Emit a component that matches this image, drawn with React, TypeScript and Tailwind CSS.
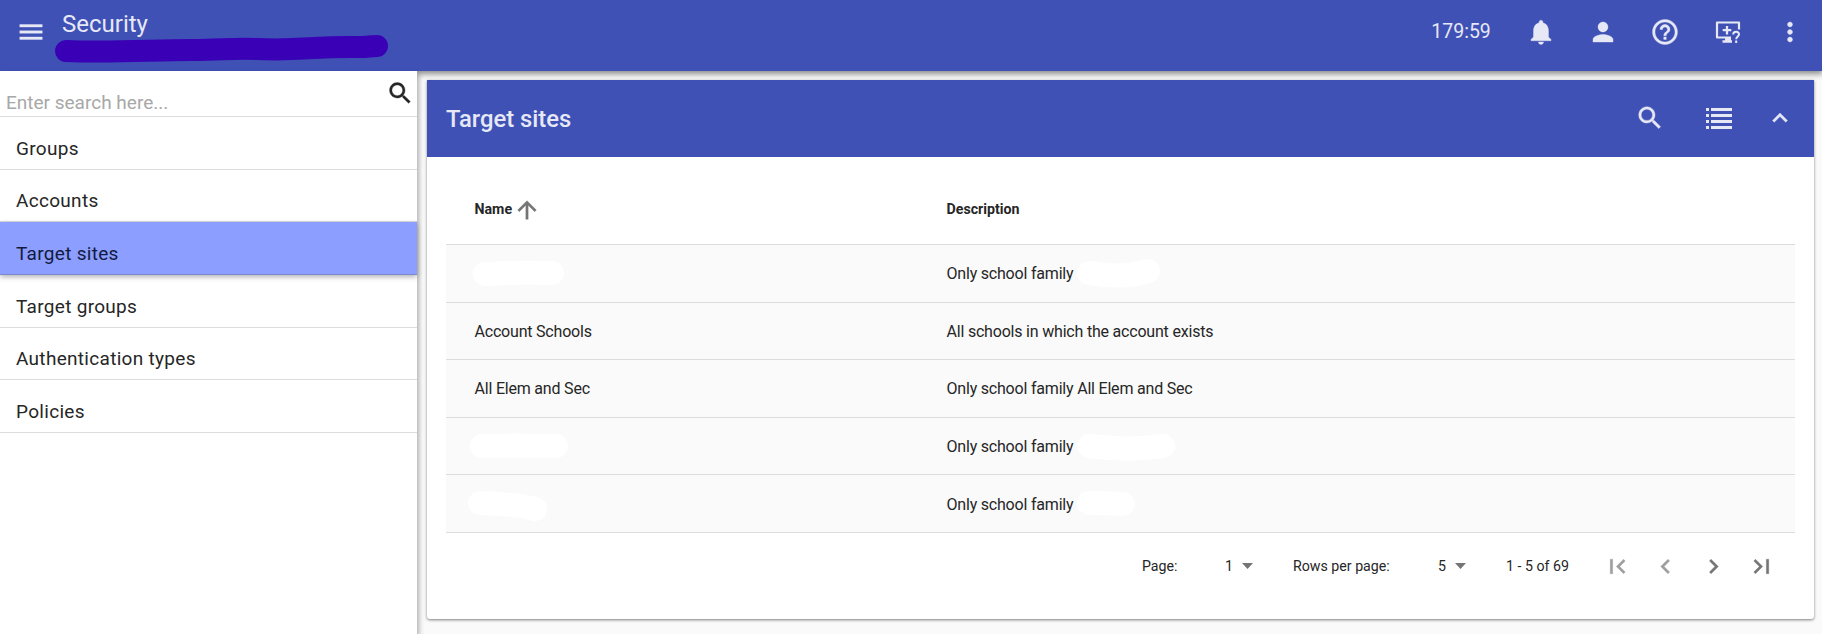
import type { ReactNode } from "react";

const ICON = {
  menu: "M3 18h18v-2H3v2zm0-5h18v-2H3v2zm0-7v2h18V6H3z",
  search:
    "M15.5 14h-.79l-.28-.27C15.41 12.59 16 11.11 16 9.5 16 5.91 13.09 3 9.5 3S3 5.91 3 9.5 5.91 16 9.5 16c1.61 0 3.09-.59 4.23-1.57l.27.28v.79l5 4.99L20.49 19l-4.99-5zm-6 0C7.01 14 5 11.99 5 9.5S7.01 5 9.5 5 14 7.01 14 9.5 11.99 14 9.5 14z",
  bell: "M12 22c1.1 0 2-.9 2-2h-4c0 1.1.89 2 2 2zm6-6v-5c0-3.07-1.64-5.64-4.5-6.32V4c0-.83-.67-1.5-1.5-1.5s-1.5.67-1.5 1.5v.68C7.63 5.36 6 7.92 6 11v5l-2 2v1h16v-1l-2-2z",
  person:
    "M12 12c2.21 0 4-1.79 4-4s-1.79-4-4-4-4 1.79-4 4 1.79 4 4 4zm0 2c-2.67 0-8 1.34-8 4v2h16v-2c0-2.66-5.33-4-8-4z",
  help: "M11 18h2v-2h-2v2zm1-16C6.48 2 2 6.48 2 12s4.48 10 10 10 10-4.48 10-10S17.52 2 12 2zm0 18c-4.41 0-8-3.59-8-8s3.59-8 8-8 8 3.59 8 8-3.59 8-8 8zm0-14c-2.21 0-4 1.79-4 4h2c0-1.1.9-2 2-2s2 .9 2 2c0 2-3 1.75-3 5h2c0-2.25 3-2.5 3-5 0-2.21-1.79-4-4-4z",
  more: "M12 8c1.1 0 2-.9 2-2s-.9-2-2-2-2 .9-2 2 .9 2 2 2zm0 2c-1.1 0-2 .9-2 2s.9 2 2 2 2-.9 2-2-.9-2-2-2zm0 6c-1.1 0-2 .9-2 2s.9 2 2 2 2-.9 2-2-.9-2-2-2z",
  up: "M12 8l-6 6 1.41 1.41L12 10.83l4.59 4.58L18 14z",
  sort: "M4 12l1.41 1.41L11 7.83V20h2V7.83l5.58 5.59L20 12l-8-8-8 8z",
  first: "M18.41 16.59L13.82 12l4.59-4.59L17 6l-6 6 6 6zM6 6h2v12H6z",
  prev: "M15.41 7.41L14 6l-6 6 6 6 1.41-1.41L10.83 12z",
  next: "M10 6L8.59 7.41 13.17 12l-4.58 4.59L10 18l6-6z",
  last: "M5.59 7.41L10.18 12l-4.59 4.59L7 18l6-6-6-6zM16 6h2v12h-2z",
};

function Icon({ d, className = "size-[30px]" }: { d: string; className?: string }) {
  return (
    <svg viewBox="0 0 24 24" fill="currentColor" className={`shrink-0 ${className}`}>
      <path d={d} stroke="currentColor" strokeWidth="0.3" />
    </svg>
  );
}

function MonitorHelp() {
  return (
    <svg viewBox="0 0 30 30" fill="none" stroke="currentColor" className="size-[30px] shrink-0">
      <path d="M18 20.500H4V5.500H26V12.500" strokeWidth="2.200" strokeLinejoin="round" />
      <path d="M14 9v8.500M9.700 13.200h8.600" strokeWidth="2.300" />
      <path d="M12 21h6v2.300h1v2.400H9.500v-2.400H12z" fill="currentColor" stroke="none" />
      <path d="M20.200 17.400c0-3.500 5.800-3.500 5.800-.2 0 2.300-2.800 2.300-2.800 5.100M23.200 23.600v2.400" strokeWidth="2" />
    </svg>
  );
}

function ListIcon() {
  return (
    <svg viewBox="0 0 26 21" fill="currentColor" className="h-[21px] w-[26px] shrink-0">
      {[0, 6, 12, 18].map((y) => (
        <g key={y}>
          <rect x="0" y={y} width="3" height="3" />
          <rect x="5" y={y} width="21" height="3" />
        </g>
      ))}
    </svg>
  );
}

const menu = ["Groups", "Accounts", "Target sites", "Target groups", "Authentication types", "Policies"];

function Blob({ d, className, width = 24 }: { d: string; className: string; width?: number }) {
  return (
    <svg className={`absolute overflow-visible ${className}`} width="1" height="1" fill="none" stroke="currentColor">
      <path d={d} strokeWidth={width} strokeLinecap="round" strokeLinejoin="round" />
    </svg>
  );
}

const rows: { name: ReactNode; text: string; mask?: ReactNode }[] = [
  {
    name: <Blob className="left-0 top-0 text-white" d="M10 29 Q40 27 77 28" />,
    text: "Only school family",
    mask: <Blob className="left-0 top-0 text-white" d="M142 28 Q175 34 201 26" />,
  },
  { name: "Account Schools", text: "All schools in which the account exists" },
  { name: "All Elem and Sec", text: "Only school family All Elem and Sec" },
  {
    name: <Blob className="left-0 top-0 text-white" d="M7 28 Q40 27 81 28" />,
    text: "Only school family",
    mask: <Blob className="left-0 top-0 text-white" d="M142 28 Q180 33 216 28" />,
  },
  {
    name: <Blob className="left-0 top-0 text-white" d="M5 28 Q50 30 60 34" />,
    text: "Only school family",
    mask: <Blob className="left-0 top-0 text-white" d="M142 28 Q160 28 176 29" />,
  },
];

export default function App() {
  return (
    <div className="flex h-[634px] w-[1822px] flex-col overflow-hidden bg-[#fafafa] font-[Roboto,sans-serif] text-[#262626]">
      <header className="relative z-10 flex h-[71px] shrink-0 bg-[#3f51b5] text-[#e6e8f6] shadow-[0_2px_6px_1px_rgba(0,0,0,0.45)]">
        <div className="flex w-[62px] items-center pb-2 pl-4">
          <Icon d={ICON.menu} />
        </div>
        <div className="relative pt-[9px] text-[24px] leading-[30px]">
          Security
          <Blob
            className="left-0 top-0 text-[#3a00b5]"
            width={22}
            d="M4 51 C50 53 90 50 130 50 C160 50 170 48 195 49 C240 51 250 46 300 47 C306 47 308 46 315 46"
          />
        </div>
        <div className="ml-auto flex items-center pb-2 pr-[17px]">
          <span className="mr-[35px] text-[19.500px]">179:59</span>
          <div className="flex items-center gap-[32.300px]">
            <Icon d={ICON.bell} />
            <Icon d={ICON.person} />
            <Icon d={ICON.help} />
            <MonitorHelp />
            <Icon d={ICON.more} />
          </div>
        </div>
      </header>
      <div className="flex min-h-0 flex-1">
        <aside className="z-20 flex w-[417px] shrink-0 flex-col bg-white shadow-[2px_3px_5px_rgba(0,0,0,0.3)]">
          <div className="flex h-[46px] shrink-0 justify-between border-b border-[#dcdcdc] pl-[6px] pr-[3px]">
            <span className="pt-[18px] text-[19px] leading-[28px] text-[#a8a8a8]">Enter search here...</span>
            <Icon d={ICON.search} className="mt-[8px] size-[28.500px]" />
          </div>
          {menu.map((m) => (
            <div
              key={m}
              className={`flex h-[52.700px] shrink-0 items-center border-b pl-[16px] pt-[12px] text-[19px] tracking-[0.3px] ${
                m === "Target sites"
                  ? "relative border-[#7d86d0] bg-[#8c9eff] text-[#131a40] shadow-[0_2px_5px_rgba(0,0,0,0.3)]"
                  : "border-[#dcdcdc]"
              }`}
            >
              {m}
            </div>
          ))}
        </aside>
        <main className="min-w-0 flex-1 pl-[10px] pr-[8px] pt-[9px]">
          <section className="flex h-[539px] flex-col rounded-b-[3px] bg-white shadow-[0_1px_3px_rgba(0,0,0,0.5)]">
            <div className="flex h-[77px] shrink-0 items-center bg-[#3f51b5] pl-[19px] pr-[19px] text-[#e6e8f6]">
              <h2 className="pt-[2px] text-[23.800px] font-medium">Target sites</h2>
              <div className="ml-auto flex items-center pb-px">
                <Icon d={ICON.search} />
                <div className="ml-[41px] mr-[33px]">
                  <ListIcon />
                </div>
                <Icon d={ICON.up} />
              </div>
            </div>
            <div className="mx-[19px] flex h-[88px] shrink-0 items-center border-b border-[#dcdcdc] pl-[28.500px] pt-[18px] text-[14.200px] font-bold">
              <div className="flex w-[472px] items-center">
                Name
                <Icon d={ICON.sort} className="ml-px size-[28px] text-[#757575]" />
              </div>
              <div>Description</div>
            </div>
            {rows.map((r, i) => (
              <div
                key={i}
                className="mx-[19px] flex h-[57.600px] shrink-0 items-center border-b border-[#dcdcdc] bg-[#fafafa] pl-[28.500px] text-[16px] tracking-[-0.2px]"
              >
                <div className="relative flex h-full w-[472px] items-center pt-[2px]">{r.name}</div>
                <div className="relative flex h-full items-center pt-[2px]">
                  {r.text}
                  {r.mask}
                </div>
              </div>
            ))}
            <div className="ml-auto mr-[38px] flex h-[67px] items-center text-[14.200px]">
              <span className="w-[83px]">Page:</span>
              <span className="w-[17px]">1</span>
              <Caret />
              <span className="ml-[40px] w-[145px]">Rows per page:</span>
              <span className="w-[17px]">5</span>
              <Caret />
              <span className="ml-[40px] w-[97px]">1 - 5 of 69</span>
              <div className="flex gap-[19px] text-[#757575]">
                <Icon d={ICON.first} className="size-[29px] text-[#9e9e9e]" />
                <Icon d={ICON.prev} className="size-[29px] text-[#9e9e9e]" />
                <Icon d={ICON.next} className="size-[29px]" />
                <Icon d={ICON.last} className="size-[29px]" />
              </div>
            </div>
          </section>
        </main>
      </div>
    </div>
  );
}

function Caret() {
  return (
    <svg viewBox="0 0 11 6" className="h-[6px] w-[11px] text-[#757575]" fill="currentColor">
      <path d="M0 0h11l-5.500 6z" />
    </svg>
  );
}
